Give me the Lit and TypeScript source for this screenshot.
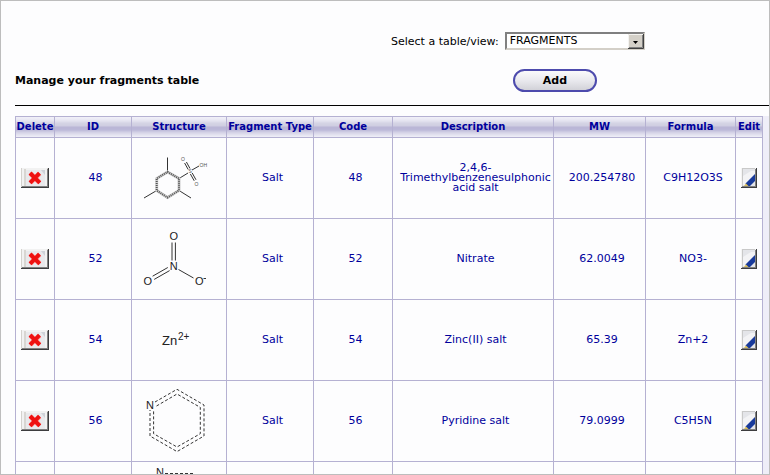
import { LitElement, html, css, svg, SVGTemplateResult } from "lit";
import { customElement } from "lit/decorators.js";

interface Fragment {
  id: string;
  name: string;
  type: string;
  description: string;
  mw: string;
  formula: string;
  drawing: SVGTemplateResult;
}

const mesitylene = svg`
  <g class="bond">
    <path d="M35.5 34V19.5M24.7 52.5L12 60M47 52.5L59 60M47 40.5L56 35M60 32L67 28"/>
    <path class="soft" d="M35.5 34L47 40.5V52.5L35.5 59.5L24.7 52.5V40.5Z"/>
    <path class="ring" d="M35.5 34L47 40.5V52.5L35.5 59.5L24.7 52.5V40.5Z"/>
    <path d="M56.2 31.5L52.6 25M58 30.5L54.4 24M58.4 36L62.2 42.8M60.2 35L64 41.8"/>
  </g>
  <text class="tiny" x="49" y="23">O</text>
  <text class="tiny" x="56.5" y="35">S</text>
  <text class="tiny" x="62.5" y="47.5">O</text>
  <text class="tiny" x="67.5" y="28.5">OH</text>`;

const nitrate = svg`
  <g class="bond">
    <path d="M40 23.5V41.5M43.4 23.5V41.5M35.8 48.5L20.6 57.2M37.6 51.6L22.2 60.4M46.5 50.5L61.5 59"/>
  </g>
  <text class="atom" x="37.5" y="21">O</text>
  <text class="atom" x="37.8" y="51">N</text>
  <text class="atom" x="11.5" y="66">O</text>
  <text class="atom" x="63" y="66">O</text>
  <path class="bond" d="M71.5 59.5H74"/>`;

const zinc = svg`
  <text class="ion" x="30" y="45">Zn</text>
  <text class="charge" x="46" y="40">2+</text>`;

const pyridine = svg`
  <g class="bond dash">
    <path d="M23 21L45 8.3L72 24V55L45 70.6L18 55V29"/>
    <path d="M24.5 25L45 13L68.3 26.4V52.7L45 66L21.6 52.7V29"/>
  </g>
  <text class="atom" x="14" y="28">N</text>`;

const pyrimidine = svg`
  <g class="bond dash"><path d="M33 11.5H61L74 36L61 60H32L18 36L26 18"/></g>
  <text class="atom" x="24" y="14">N</text>`;

const FRAGMENTS: Fragment[] = [
  { id: "48", name: "48", type: "Salt", description: "2,4,6-Trimethylbenzenesulphonic acid salt", mw: "200.254780", formula: "C9H12O3S", drawing: mesitylene },
  { id: "52", name: "52", type: "Salt", description: "Nitrate", mw: "62.0049", formula: "NO3-", drawing: nitrate },
  { id: "54", name: "54", type: "Salt", description: "Zinc(II) salt", mw: "65.39", formula: "Zn+2", drawing: zinc },
  { id: "56", name: "56", type: "Salt", description: "Pyridine salt", mw: "79.0999", formula: "C5H5N", drawing: pyridine },
  { id: "", name: "", type: "", description: "", mw: "", formula: "", drawing: pyrimidine },
];

const HEADINGS = ["Delete", "ID", "Structure", "Fragment Type", "Code", "Description", "MW", "Formula", "Edit"];
const COLUMNS = ["c-delete", "c-id", "c-structure", "c-type", "c-code", "c-description", "c-mw", "c-formula", "c-edit"];

@customElement("fragment-table")
export class FragmentTable extends LitElement {
  static styles = css`
    :host { display: block; background: #efeef8; padding-right: 6px; }
    table { width: 100%; border-collapse: collapse; table-layout: fixed; background: #fdfdfe; color: #00009c; font-size: 11px; line-height: 10px; }
    th, td { border: 1px solid #b5b1d2; padding: 0; text-align: center; vertical-align: middle; }
    th { height: 20px; font-size: 10px; line-height: 12px; white-space: nowrap; background: linear-gradient(#f1f0f8 0, #e6e5f1 15%, #d3d2e3 30%, #d0cfe2 42%, #b8b4d5 48%, #bbb8d8 62%, #d5d3e6 75%, #f3f2fa 100%); }
    td { height: 80px; overflow: hidden; }
    .c-delete { width: 39px; }
    .c-id { width: 77px; }
    .c-structure { width: 95px; }
    .c-type { width: 87px; }
    .c-code { width: 79px; }
    .c-mw { width: 92px; }
    .c-formula { width: 90px; }
    .c-edit { width: 27px; }
    .value { padding-left: 5px; }
    svg { display: block; margin: 0 auto; }
    button { display: block; margin: 0 auto; padding: 0; border: 0; background: none; cursor: pointer; }
    .bond { fill: none; stroke: #333; stroke-width: 1; }
    .soft { stroke: #ccc; stroke-width: 3; }
    .ring { stroke: #555; stroke-width: 2; stroke-dasharray: 1 1; }
    .dash { stroke-dasharray: 3 2; }
    text { font-family: "Liberation Sans", Arial, sans-serif; fill: #222; }
    .tiny { font-size: 5px; fill: #555; }
    .atom { font-size: 11px; }
    .ion { font-size: 13px; }
    .charge { font-size: 10px; }
  `;

  private deleteIcon() {
    return svg`<svg width="28" height="20" viewBox="0 0 28 20" aria-hidden="true">
      <rect width="28" height="20" fill="#d4d2ce"/>
      <rect x="1" width="25" height="18" fill="#f2f2f2"/>
      <rect x="3" y="1" width="2" height="17" fill="#d8d6d2"/>
      <rect x="5" y="2" width="19" height="16" fill="#e9e9ec"/>
      <path d="M20 2H24V7Z" fill="#cfd2d8"/>
      <path d="M0 19.5H28M27.5 0V20" stroke="#3d3d3f"/>
      <path d="M1 18.5H27M26.5 1V19" stroke="#808080"/>
      <path d="M9.5 5.5L18.5 14.5M18.5 5.5L9.5 14.5" stroke="#ff9b98" stroke-width="5"/>
      <path d="M9 5L18.8 14.8M18.5 5.2L9 14.8" stroke="#ee1111" stroke-width="4"/>
    </svg>`;
  }

  private editIcon() {
    return svg`<svg width="16" height="20" viewBox="0 0 16 20" aria-hidden="true">
      <rect width="16" height="20" fill="#f4f4f4"/>
      <rect x="1" y="1" width="13" height="17" fill="#e4e5e9"/>
      <path d="M2 8L10 3H14V7L4 17H2Z" fill="#f3f3f5"/>
      <path d="M1.5 0V19M1 .5H14" stroke="#c9c9c9"/>
      <path d="M4.5 15.5L14 6V13L9 18H6Z" fill="#183a9b"/>
      <path d="M3 18L5 15.5L7.5 18Z" fill="#d9bd5a"/>
      <path d="M0 19.5H16M15.5 0V20" stroke="#3d3d3f"/>
      <path d="M1 18.5H15M14.5 1V19" stroke="#808080"/>
    </svg>`;
  }

  render() {
    return html`<table>
      <colgroup>${COLUMNS.map((name) => html`<col class=${name}>`)}</colgroup>
      <thead><tr>${HEADINGS.map((text) => html`<th scope="col">${text}</th>`)}</tr></thead>
      <tbody>${FRAGMENTS.map((row) => html`<tr>
        <td><button type="button" aria-label="Delete">${this.deleteIcon()}</button></td>
        <td class="value">${row.id}</td>
        <td><svg width="94" height="80" viewBox="0 0 94 80">${row.drawing}</svg></td>
        <td class="value">${row.type}</td>
        <td class="value">${row.name}</td>
        <td class="value">${row.description}</td>
        <td class="value">${row.mw}</td>
        <td class="value">${row.formula}</td>
        <td><button type="button" aria-label="Edit">${this.editIcon()}</button></td>
      </tr>`)}</tbody>
    </table>`;
  }
}

@customElement("app-root")
export class AppRoot extends LitElement {
  static styles = css`
    :host { display: block; box-sizing: border-box; height: 100vh; overflow: hidden; padding-left: 14px; border: 1px solid #bdbdbd; background: #fdfdfe; color: #000; font-family: Verdana, "DejaVu Sans", sans-serif; font-size: 11px; }
    header { display: grid; grid-template-columns: 1fr 1fr; align-items: center; row-gap: 19px; padding: 31px 2px 13px 0; border-bottom: 1px solid #000; margin-bottom: 10px; }
    .picker { grid-column: 2; display: flex; align-items: center; gap: 6px; white-space: nowrap; }
    .field { position: relative; display: flex; }
    select { appearance: none; box-sizing: border-box; width: 140px; height: 18px; padding: 0 18px 0 3px; border: 2px solid; border-color: #808080 #d4d0c8 #d4d0c8 #808080; border-radius: 0; background: #fff; color: #000; font: inherit; line-height: 14px; }
    .arrow { position: absolute; top: 2px; right: 1px; pointer-events: none; }
    h1 { margin: 0; font-size: 11px; line-height: 14px; }
    .add { justify-self: start; box-sizing: border-box; width: 84px; height: 23px; margin-left: 122px; padding: 0; border: 2px solid #4d4bad; border-radius: 12px; background: linear-gradient(#fafafb, #e9e9ee 50%, #d2d2d8); color: #000; font: bold 11px Verdana, "DejaVu Sans", sans-serif; }
  `;

  render() {
    return html`
      <header>
        <div class="picker">
          <label for="view">Select a table/view:</label>
          <span class="field">
            <select id="view"><option>FRAGMENTS</option></select>
            <svg class="arrow" width="16" height="15" viewBox="0 0 16 15" aria-hidden="true">
              <rect width="16" height="15" fill="#d4d0c8"/>
              <path d="M.5 14V.5H15" fill="none" stroke="#f4f3f0"/>
              <path d="M0 14.5H15.5V0" fill="none" stroke="#404040"/>
              <path d="M1 13.5H14.5V1" fill="none" stroke="#808080"/>
              <path d="M5 7H10L7.5 10Z"/>
            </svg>
          </span>
        </div>
        <h1>Manage your fragments table</h1>
        <button class="add" type="button">Add</button>
      </header>
      <fragment-table></fragment-table>`;
  }
}
